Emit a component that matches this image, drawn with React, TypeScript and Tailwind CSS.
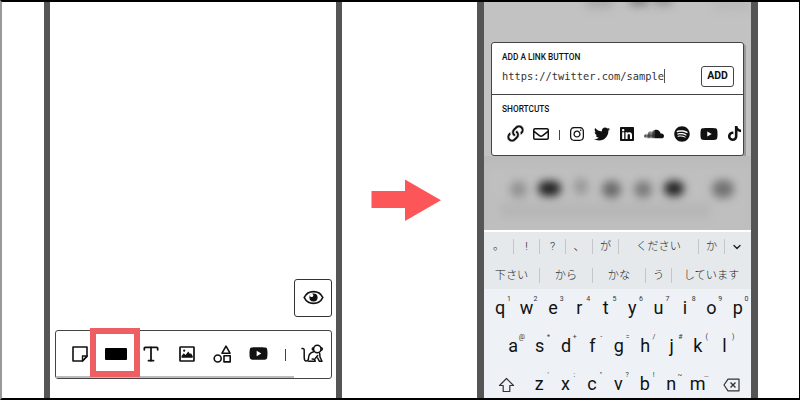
import type { ReactNode } from "react";
import { ChevronDown, Type } from "lucide-react";
import { FaLink, FaSoundcloud } from "react-icons/fa";
import {
  FaInstagram, FaLinkedin, FaRegEnvelope, FaSpotify, FaTiktok, FaTwitter, FaYoutube,
} from "react-icons/fa6";

function NoteIcon() {
  return (
    <svg width="16" height="16" viewBox="0 0 16 16" fill="none" stroke="#111" strokeWidth="1.6" strokeLinejoin="round">
      <path d="M1 1h14v9.5L10.500 15H1z" />
      <path d="M15 10h-4.500v5z" strokeWidth="1.4" />
    </svg>
  );
}

function ImageIcon() {
  return (
    <svg width="16" height="16" viewBox="0 0 16 16">
      <rect x="1" y="1" width="14" height="14" rx=".6" fill="none" stroke="#111" strokeWidth="1.7" />
      <circle cx="5.200" cy="4.700" r="1.100" fill="#111" />
      <path d="M2.500 11.800V10l2.300-2.700 1.700 1.700L9.300 5.500l1.700 2.400 1-.7 1.700 2.800v1.800z" fill="#111" />
    </svg>
  );
}

function ShapesIcon() {
  return (
    <svg width="19" height="18" viewBox="0 0 19 18" fill="none" stroke="#111" strokeWidth="1.6" strokeLinejoin="round">
      <path d="M13 1.200 17 8.200H9z" />
      <circle cx="4.700" cy="13.500" r="3.500" />
      <path d="M11 10.700h6.200v6.200H11z" />
    </svg>
  );
}

function MonkeyIcon() {
  return (
    <svg width="23" height="19" viewBox="0 0 23 19" fill="none" stroke="#111" strokeWidth="1.5" strokeLinecap="round" strokeLinejoin="round">
      <path d="M1 4.500c1.600-.4 2.200.5 2.200 2v7c0 2.200.8 3.500 2.200 3.500 1.500 0 2.100-1.200 2.100-3 0-4 2.300-5.600 5.200-6.300" />
      <path d="M7.700 17.200h6.500c0-1.600-1.200-2.300-3-2.200" />
      <path d="M14.200 14.500l2.500-3M18.700 9.500l.3 3.500 2 4.200h-2.700l-1.600-3.200" />
      <circle cx="16.300" cy="5" r="3.700" fill="#fff" />
      <path d="M12.300 3.700c-1.400.4-1.400 2.300.1 2.700M20.300 3.700c1.400.4 1.400 2.300-.1 2.700" />
    </svg>
  );
}

function EyeIcon() {
  return (
    <svg width="21" height="15" viewBox="0 0 21 15">
      <path d="M1.200 7.500C5 -.4 16 -.4 19.800 7.500 16 15.400 5 15.400 1.200 7.500z" fill="none" stroke="#111" strokeWidth="1.700" />
      <circle cx="10.500" cy="7.500" r="4.100" fill="#111" />
      <circle cx="8.600" cy="5.400" r="1.700" fill="#fff" />
    </svg>
  );
}

function Cell({ children, w }: { children: ReactNode; w: string }) {
  return <div className={`${w} flex shrink-0 items-center justify-center`}>{children}</div>;
}

function LeftPhone() {
  return (
    <div className="flex h-[398px] w-[298px] shrink-0 flex-col border-x-[6px] border-[#555] bg-white pl-[5px]">
      <div className="mt-[278px] ml-[239px] flex h-[38px] w-[38px] items-center justify-center rounded-[3px] border border-[#333] pb-[2px]">
        <EyeIcon />
      </div>
      <div className="relative mt-[13px] flex h-[49px] w-[277px] items-center rounded-[3px] border border-[#444] pb-[2px] pl-[6px]">
        <Cell w="w-[36px]"><NoteIcon /></Cell>
        <Cell w="w-[35px]"><div className="h-[12px] w-[22px] rounded-[1px] bg-black" /></Cell>
        <Cell w="w-[36px]"><Type size={20} strokeWidth={2.1} color="#111" /></Cell>
        <Cell w="w-[35px]"><ImageIcon /></Cell>
        <Cell w="w-[36px]"><ShapesIcon /></Cell>
        <Cell w="w-[36px]"><FaYoutube size={19} /></Cell>
        <Cell w="w-[18px]"><div className="mt-[2px] h-[12px] w-px bg-[#444]" /></Cell>
        <Cell w="w-[37px]"><MonkeyIcon /></Cell>
        <div className="absolute bottom-0 left-0 h-[2px] w-[238px] bg-[#bbb]" />
        <div className="absolute -top-[3px] left-[34px] h-[49px] w-[50px] border-6 border-[#ed5f63]" />
      </div>
    </div>
  );
}

function LinkPanel() {
  return (
    <div className="relative ml-[7px] h-[114px] w-[253px] rounded-[3px] border border-[#444] bg-white shadow-[2px_2px_0_#999]">
      <div className="h-[52px] border-b border-[#444] pl-[10px]">
        <div className="pt-[9px] text-[8.300px] leading-[10px] font-medium whitespace-nowrap">ADD A LINK BUTTON</div>
        <div className="mt-[3px] flex h-[22px] items-center">
          <div className="w-[163px] border-r border-[#555] font-['DejaVu_Sans_Mono','Liberation_Mono',monospace] text-[10.350px] leading-[14px] text-[#333]">https://twitter.com/sample</div>
          <div className="ml-[36px] flex h-[21px] w-[33px] items-center justify-center rounded-[3px] border border-[#444] text-[10.500px] font-bold">ADD</div>
        </div>
      </div>
      <div className="pt-[9px] pl-[10px] text-[8.300px] leading-[10px] font-medium">SHORTCUTS</div>
      <div className="mt-[10px] flex h-[19px] items-center pl-[10px] text-[#111]">
        <Cell w="w-[26px]"><FaLink size={17} stroke="#fff" strokeWidth={20} /></Cell>
        <Cell w="w-[26px]"><FaRegEnvelope size={16} /></Cell>
        <Cell w="w-[11px]"><div className="mt-[2px] h-[10px] w-px bg-[#444]" /></Cell>
        <Cell w="w-[24px]"><FaInstagram size={16} /></Cell>
        <Cell w="w-[25px]"><FaTwitter size={16} /></Cell>
        <Cell w="w-[26px]"><FaLinkedin size={16} /></Cell>
        <Cell w="w-[28px]"><FaSoundcloud size={20} /></Cell>
        <Cell w="w-[27px]"><FaSpotify size={16} /></Cell>
        <Cell w="w-[27px]"><FaYoutube size={18} /></Cell>
        <Cell w="w-[24px]"><FaTiktok size={15} /></Cell>
      </div>
    </div>
  );
}

function Suggestion({ w, text, last = false }: { w: string; text: string; last?: boolean }) {
  return (
    <div className={`${w} ${last ? "" : "border-r border-[#c3c7ca]"} flex h-[15px] shrink-0 items-center justify-center pt-[2px] whitespace-nowrap`}>{text}</div>
  );
}

function Keys({ keys, marks }: { keys: string; marks: string[] }) {
  return (
    <>
      {keys.split("").map((k, i) => (
        <div key={k} className="relative w-[26.400px] shrink-0 text-center">
          {k}
          <span className="absolute -top-px left-[18px] w-[8px] text-center text-[7px] leading-[8px] text-[#333]">{marks[i]}</span>
        </div>
      ))}
    </>
  );
}

function Keyboard() {
  return (
    <div className="flex h-[168px] w-[267px] flex-col border-t-2 border-white bg-[#eef2f7] text-[#111]">
      <div className="h-[57px] bg-[#e5e9ec] text-[11.200px] font-light text-[#222]">
        <div className="flex h-[29px] items-center">
          <Suggestion w="w-[30px]" text="。" />
          <Suggestion w="w-[26px]" text="!" />
          <Suggestion w="w-[26px]" text="?" />
          <Suggestion w="w-[27px]" text="、" />
          <Suggestion w="w-[26px]" text="が" />
          <Suggestion w="w-[80px]" text="ください" />
          <Suggestion w="w-[26px]" text="か" />
          <Cell w="w-[24px]"><ChevronDown size={12} strokeWidth={2.800} /></Cell>
        </div>
        <div className="flex h-[28px] items-center">
          <Suggestion w="w-[56px]" text="下さい" />
          <Suggestion w="w-[53px]" text="から" />
          <Suggestion w="w-[53px]" text="かな" />
          <Suggestion w="w-[26px]" text="う" />
          <Suggestion w="w-[79px]" text="しています" last />
        </div>
      </div>
      <div className="mt-[7px] flex pl-[3px] text-[18px] leading-[24px]">
        <Keys keys="qwertyuiop" marks={["1", "2", "3", "4", "5", "6", "7", "8", "9", "0"]} />
      </div>
      <div className="mt-[14px] flex pl-[16px] text-[18px] leading-[24px]">
        <Keys keys="asdfghjkl" marks={["@", "*", "+", "-", "=", "/", "#", "(", ")"]} />
      </div>
      <div className="mt-[14px] flex items-center text-[18px] leading-[24px]">
        <svg className="ml-[14px] mr-[11px] mt-[2px] shrink-0" width="17" height="16" viewBox="0 0 17 16" fill="none" stroke="#333" strokeWidth="1.200" strokeLinejoin="round">
          <path d="M8.500 1.500 15.500 8.500H11.800V14.500H5.200V8.500H1.500z" />
        </svg>
        <Keys keys="zxcvbnm" marks={["'", ":", "\"", "?", "!", "~", "…"]} />
        <svg className="mt-[1px] ml-[12px] shrink-0" width="17" height="14" viewBox="0 0 17 14" fill="none" stroke="#333" strokeWidth="1.200" strokeLinejoin="round">
          <path d="M5 1.200h11v11.600H5L1 7z" />
          <path d="m7.500 4.500 5 5m0-5-5 5" strokeWidth="1.400" />
        </svg>
      </div>
    </div>
  );
}

function RightPhone() {
  return (
    <div className="flex h-[398px] w-[281px] shrink-0 flex-col overflow-hidden border-x-[7px] border-[#555] bg-[#c2c2c2]">
      <div className="relative h-[41px] overflow-hidden">
        <div className="absolute -top-[7px] left-[102px] h-[14px] w-[26px] bg-[#aaa] blur-[5px]" />
        <div className="absolute -top-[7px] left-[146px] h-[12px] w-[18px] bg-[#888] blur-[4px]" />
        <div className="absolute -top-[7px] left-[170px] h-[12px] w-[18px] bg-[#999] blur-[4px]" />
        <div className="absolute -top-[2px] left-[230px] h-[10px] w-[35px] bg-[#b8b8b8] blur-[5px]" />
      </div>
      <LinkPanel />
      <div className="relative h-[74px] overflow-hidden bg-[#bfbfbf] shadow-[inset_0_8px_8px_#bbb]">
        <div className="absolute top-[48px] left-[16px] h-[13px] w-[210px] bg-[#b5b5b5] blur-[5px]" />
        <div className="absolute top-[25px] left-[26px] h-[17px] w-[17px] rounded-full bg-[#929292] blur-[4px]" />
        <div className="absolute top-[25px] left-[54px] h-[15px] w-[23px] rounded-full bg-[#222] blur-[4px]" />
        <div className="absolute top-[22px] left-[90px] h-[17px] w-[14px] rounded-full bg-[#999] blur-[4px]" />
        <div className="absolute top-[25px] left-[118px] h-[17px] w-[19px] rounded-full bg-[#6a6a6a] blur-[4px]" />
        <div className="absolute top-[25px] left-[150px] h-[17px] w-[18px] rounded-full bg-[#7a7a7a] blur-[4px]" />
        <div className="absolute top-[25px] left-[180px] h-[15px] w-[20px] rounded-full bg-[#222] blur-[4px]" />
        <div className="absolute top-[24px] left-[228px] h-[18px] w-[22px] rounded-full bg-[#727272] blur-[4px]" />
      </div>
      <Keyboard />
    </div>
  );
}

export default function App() {
  return (
    <div className="relative flex h-[400px] w-[800px] overflow-hidden bg-white pt-[1px] font-[Roboto,'Noto_Sans_CJK_JP',sans-serif] text-[#111]">
      <div className="w-[44px] shrink-0" />
      <LeftPhone />
      <div className="flex w-[135px] shrink-0 items-start pt-[178px] pl-[29px]">
        <svg width="71" height="43" viewBox="0 0 71 43">
          <path d="M.5 12h33.500V.5L70 21.200 34 42V29H.5z" fill="#fd5658" />
        </svg>
      </div>
      <RightPhone />
      <div className="pointer-events-none absolute inset-0 border-y-2 border-r border-l-2 border-t-black border-r-black border-b-black border-l-[#999]" />
    </div>
  );
}
